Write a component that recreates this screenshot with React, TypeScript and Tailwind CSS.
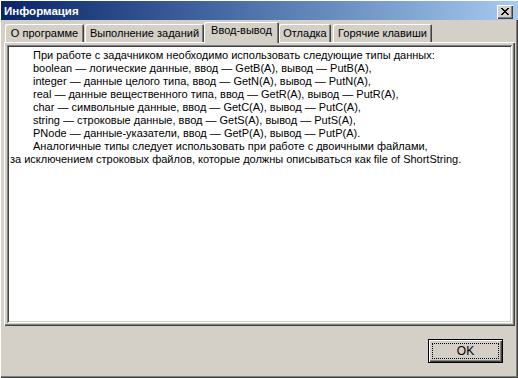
import React from "react";

const raised =
  "shadow-[inset_1px_1px_0_#ffffff,inset_-1px_-1px_0_#404040,inset_-2px_-2px_0_#808080]";

function Tab({ label, w, ml, active }: { label: string; w: string; ml: string; active?: boolean }) {
  return (
    <div
      className={
        (active
          ? "relative z-10 h-[21px] pt-[2px] "
          : "mt-[2px] h-[18px] pt-[3px] ") +
        w +
        " " +
        ml +
        " bg-[#d4d0c8] rounded-t-[2px] flex justify-center text-[11px] leading-[13px] text-black shadow-[inset_1px_1px_0_#ffffff,inset_-1px_0_0_#404040,inset_-2px_0_0_#808080]"
      }
    >
      <span className="whitespace-pre">{label}</span>
    </div>
  );
}

const lines: { t: string; indent: boolean }[] = [
  { t: "При работе с задачником необходимо использовать следующие типы данных:", indent: true },
  { t: "boolean — логические данные, ввод — GetB(A), вывод — PutB(A),", indent: true },
  { t: "integer — данные целого типа, ввод — GetN(A), вывод — PutN(A),", indent: true },
  { t: "real — данные вещественного типа, ввод — GetR(A), вывод — PutR(A),", indent: true },
  { t: "char — символьные данные, ввод — GetC(A), вывод — PutC(A),", indent: true },
  { t: "string — строковые данные, ввод — GetS(A), вывод — PutS(A),", indent: true },
  { t: "PNode — данные-указатели, ввод — GetP(A), вывод — PutP(A).", indent: true },
  { t: "Аналогичные типы следует использовать при работе с двоичными файлами,", indent: true },
  { t: "за исключением строковых файлов, которые должны описываться как file of ShortString.", indent: false },
];

export default function App() {
  return (
    <div
      className="w-[518px] h-[378px] bg-[#d4d0c8] flex flex-col overflow-hidden shadow-[inset_1px_1px_0_#ffffff,inset_-1px_-1px_0_#404040,inset_-2px_-2px_0_#808080]"
      style={{ fontFamily: '"Liberation Sans", Arial, sans-serif' }}
    >
      {/* Title bar */}
      <div className="mt-[1px] ml-[1px] h-[19px] flex items-center bg-linear-to-r from-[#0a246a] to-[#a6caf0]">
        <span className="pl-[3px] pt-[2px] text-[11.5px] font-bold text-white leading-none">Информация</span>
        <div className="ml-auto mr-[5px] mt-[2px] w-[16px] h-[14px] bg-[#d4d0c8] flex items-center justify-center shadow-[inset_1px_1px_0_#ffffff,inset_-1px_-1px_0_#404040,inset_-2px_-2px_0_#808080]">
          <svg width="8" height="7" viewBox="0 0 8 7" className="mr-[1px]" shapeRendering="crispEdges">
            <path d="M0 0h2v1H0zM6 0h2v1H6zM1 1h2v1H1zM5 1h2v1H5zM2 2h4v1H2zM3 3h2v1H3zM2 4h4v1H2zM1 5h2v1H1zM5 5h2v1H5zM0 6h2v1H0zM6 6h2v1H6z" fill="#000" />
          </svg>
        </div>
      </div>

      {/* Tabs + panel */}
      <div className="mt-[2px] pl-[4px] pr-[3px] flex flex-col">
        <div className="h-[20px] flex items-start">
          <Tab label="О программе" w="w-[79px]" ml="ml-[1px]" />
          <Tab label="Выполнение заданий" w="w-[119px]" ml="ml-[1px]" />
          <Tab label="Ввод-вывод" w="w-[75px]" ml="ml-0" active />
          <Tab label="Отладка" w="w-[52px]" ml="ml-0" />
          <Tab label="Горячие клавиши" w="w-[99px]" ml="ml-[2px]" />
        </div>
        <div className={"h-[284px] p-[3px] flex " + raised}>
          <div className="flex-1 bg-white pt-[4px] pl-[3px] shadow-[inset_1px_1px_0_#808080,inset_-1px_-1px_0_#ffffff,inset_2px_2px_0_#404040,inset_-2px_-2px_0_#d4d0c8]">
            {lines.map((l, i) => (
              <div
                key={i}
                className={"whitespace-pre text-[11px] leading-[13px] text-black " + (l.indent ? "pl-[23px]" : "")}
              >
                {l.t}
              </div>
            ))}
          </div>
        </div>
      </div>

      {/* Bottom */}
      <div className="flex justify-end">
        <div className="mt-[13px] mr-[15px] w-[75px] h-[24px] border border-black bg-[#d4d0c8] p-[3px] shadow-[inset_1px_1px_0_#ffffff,inset_-1px_-1px_0_#404040,inset_-2px_-2px_0_#808080]">
          <div className="w-full h-full border border-dotted border-black flex items-center justify-center text-[12px] text-black leading-none">
            OK
          </div>
        </div>
      </div>
    </div>
  );
}
